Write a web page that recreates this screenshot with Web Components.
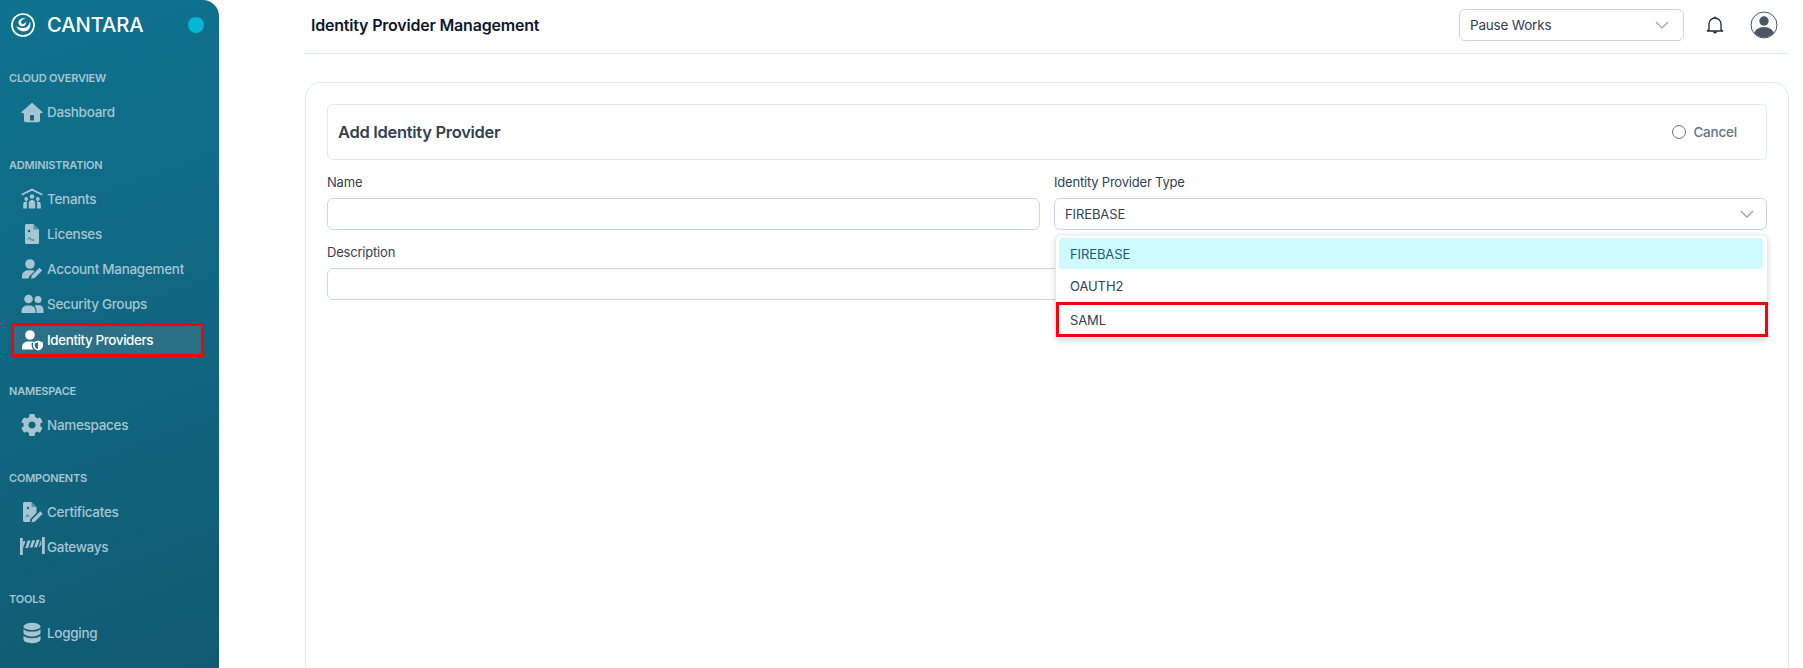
<!DOCTYPE html>
<html lang="en"><head><meta charset="utf-8"><title>Identity Provider Management</title>
<style>
html,body{margin:0;height:668px;overflow:hidden;background:#fff}
body{font-family:Inter,"Liberation Sans",sans-serif;color:#334155}
</style></head><body>
<idp-app>
  <app-sidebar slot="side">
    <nav-section label="CLOUD OVERVIEW">
      <nav-item icon="home">Dashboard</nav-item>
    </nav-section>
    <nav-section label="ADMINISTRATION">
      <nav-item icon="tenants">Tenants</nav-item>
      <nav-item icon="license">Licenses</nav-item>
      <nav-item icon="account">Account Management</nav-item>
      <nav-item icon="groups">Security Groups</nav-item>
      <nav-item icon="idp" active>Identity Providers</nav-item>
    </nav-section>
    <nav-section label="NAMESPACE">
      <nav-item icon="gear">Namespaces</nav-item>
    </nav-section>
    <nav-section label="COMPONENTS">
      <nav-item icon="cert">Certificates</nav-item>
      <nav-item icon="gate">Gateways</nav-item>
    </nav-section>
    <nav-section label="TOOLS">
      <nav-item icon="db">Logging</nav-item>
    </nav-section>
  </app-sidebar>
  <top-bar slot="top" heading="Identity Provider Management"></top-bar>
  <idp-card slot="main"></idp-card>
</idp-app>
<script>
const ICONS={
home:'<path d="M11 1.800 .800 10.800c-.6.6-.2 1.500.6 1.500H3v7.200c0 1 .8 1.800 1.800 1.800h12.400c1 0 1.800-.8 1.800-1.800v-7.200h1.600c.8 0 1.200-.9.6-1.500z"/><rect x="9" y="14" width="4" height="5.500" rx=".6" fill="#12687f"/>',
tenants:'<path d="M11 .5 .3 6l.8 1.500L11 2.800l9.900 4.700.8-1.500z"/><circle cx="11" cy="8.500" r="2.300"/><circle cx="5.200" cy="11" r="1.900"/><circle cx="16.800" cy="11" r="1.900"/><path d="M7.700 20.500v-5c0-2 1.300-3.500 3.300-3.500s3.300 1.500 3.300 3.500v5zM2.200 20.500v-4c0-1.700 1.300-3 3-3 .4 0 .8 0 1.100.2-.3.600-.4 1.200-.4 1.800v5zM19.800 20.500v-4c0-1.700-1.300-3-3-3-.4 0-.8 0-1.100.2.300.6.400 1.200.4 1.800v5z"/>',
license:'<path d="M5.500 1h7L18 6.500V19.500c0 1-.8 1.500-1.500 1.500h-11C4.700 21 4 20.400 4 19.500V2.500C4 1.600 4.700 1 5.500 1z"/><path d="M12.500 1v5.500H18z" fill="#12687f" opacity=".55"/><circle cx="8" cy="8" r="1.300" fill="#12687f"/><path d="M7 16.500c1-2.500 2-2.500 3 0 .8 1.300 1.500.5 3 .2" fill="none" stroke="#12687f" stroke-width="1"/>',
account:'<circle cx="9" cy="6" r="4.800"/><path d="M1 20.500v-2.500c0-3.300 2.700-5.800 6-5.800h4c1 0 1.900.2 2.700.7L8.300 18.300 7.500 20.500z"/><path d="M10 20.800l1-3.500 7.500-7.500 2.700 2.700-7.500 7.500z"/>',
groups:'<circle cx="7.500" cy="6" r="4.300"/><circle cx="17" cy="6.500" r="3.500"/><path d="M.5 20v-2.200c0-3 2.500-5.300 5.500-5.300h3c3 0 5.500 2.400 5.500 5.300V20z"/><path d="M15.500 20v-2.500c0-2-.8-3.600-2-4.800.7-.3 1.500-.4 2.300-.4h2.400c2.500 0 4.300 2 4.300 4.500V20z"/>',
idp:'<circle cx="9" cy="6" r="4.800"/><path d="M1 20.500v-2.200c0-3.200 2.600-5.800 5.800-5.800h4.400c.9 0 1.700.2 2.400.5-1.400.5-2.100.7-3 .9v2c0 1.700.5 3.300 2 4.600z"/><path d="M17 11.500l5 1.900v3.100c0 2.500-2 4.400-5 5-3-.6-5-2.500-5-5v-3.100z"/><path d="M17 13.300v6.800c-2-.5-3.300-2-3.300-3.700v-1.800z" fill="#2b7087"/>',
gear:'<path d="M21.300 13.500l-2-1.100c.2-.9.2-1.900 0-2.800l2-1.100c.2-.1.3-.4.2-.6-.5-1.700-1.400-3.100-2.500-4.400-.2-.2-.4-.2-.6-.1l-2 1.100c-.7-.6-1.600-1.100-2.400-1.400V.9c0-.2-.2-.4-.4-.5-1.700-.4-3.500-.4-5.100 0-.2.100-.4.300-.4.500v2.300c-.9.300-1.700.8-2.400 1.400l-2-1.100c-.2-.1-.5-.1-.6.1C1.900 4.900 1 6.300.5 7.900c-.1.200 0 .5.200.6l2 1.100c-.2.900-.2 1.900 0 2.800l-2 1.100c-.2.100-.3.400-.2.600.5 1.700 1.400 3.100 2.500 4.400.2.200.4.200.6.100l2-1.100c.7.600 1.600 1.100 2.400 1.400v2.300c0 .2.200.4.400.5 1.700.4 3.500.4 5.100 0 .2-.1.400-.3.400-.5v-2.300c.9-.3 1.700-.8 2.400-1.400l2 1.100c.2.100.5.100.6-.1 1.100-1.300 2-2.700 2.500-4.400.1-.2 0-.5-.2-.6zM11 14.600c-1.900 0-3.600-1.600-3.600-3.600s1.600-3.600 3.600-3.600 3.600 1.600 3.600 3.600-1.700 3.600-3.600 3.600z"/>',
cert:'<path d="M3.500 1h7l5 5v5.800l-6 6-.8 3.200H3.500C2.700 21 2 20.300 2 19.500v-17C2 1.700 2.700 1 3.500 1z"/><path d="M10.500 1v5h5z" fill="#12687f" opacity=".55"/><circle cx="7" cy="7" r="1.200" fill="#12687f"/><path d="M5 16c1-2.500 2-2.500 3 0" fill="none" stroke="#12687f" stroke-width="1"/><path d="M10.500 21.300l.8-3 8-8 2.400 2.400-8 8z"/>',
gate:'<rect x="-1" y="2" width="2.800" height="17"/><rect x="21" y="1" width="2.800" height="17"/><path d="M2 5.200 4.500 5 2 12.200zM6.800 4.600h2.800l-2.600 7.400H4.200zM11.300 4.200h2.800l-2.600 7.400H8.700zM15.800 3.800h2.800L16 11.200h-2.800zM20.200 3.500v5.200L18.300 11l-.6-.1z"/>',
db:'<ellipse cx="11" cy="4.500" rx="8.500" ry="3.700"/><path d="M2.500 7.300v3.500c0 2 3.800 3.700 8.500 3.700s8.500-1.700 8.500-3.700V7.300c-1.800 1.700-5 2.500-8.500 2.500s-6.700-.8-8.500-2.500z"/><path d="M2.500 13.800v3.700c0 2 3.800 3.700 8.500 3.700s8.500-1.700 8.500-3.700v-3.700c-1.800 1.700-5 2.500-8.500 2.500s-6.700-.8-8.500-2.500z"/>'
};
function shell(el,html){el.attachShadow({mode:'open'}).innerHTML=html}
customElements.define('idp-app',class extends HTMLElement{constructor(){super();shell(this,`<style>
:host{display:grid;grid-template-columns:219px 1fr;grid-template-rows:54px 1fr;height:668px;overflow:hidden}
.side{grid-row:1/3;display:flex;min-height:0}
.top{padding:0 14px 0 87px;display:block}
.main{padding:28px 14px 0 86px;min-height:0;overflow:hidden}
</style><div class="side"><slot name="side"></slot></div><div class="top"><slot name="top"></slot></div><div class="main"><slot name="main"></slot></div>`)}});
customElements.define('app-sidebar',class extends HTMLElement{constructor(){super();shell(this,`<style>
:host{display:block;width:219px;height:668px;border-top-right-radius:16px;background:linear-gradient(160deg,#0f7390 0%,#115a72 100%);box-sizing:border-box}
.brand{height:49px;padding:0 15px 0 11px;display:flex;align-items:center;box-sizing:border-box}
.name{margin-left:12px;font-size:20.200px;font-weight:500;color:#fff;letter-spacing:-.1px}
.dot{margin-left:auto;width:16px;height:16px;border-radius:50%;background:#06b6d4}
.list{display:flex;flex-direction:column;gap:19.500px;padding-top:14px}
</style><div class="brand"><svg width="24" height="24" viewBox="0 0 24 24"><circle cx="12" cy="12" r="11" fill="none" stroke="#fff" stroke-width="1.700"/><path d="M5 13C7 18 13 20 17 17 19.500 15 20 11.500 19 8 18.500 12 16 15 12.500 15 9.500 15 7 14.500 5 13z" fill="#fff"/><path d="M15 6C11 4 7 7 7.500 10.500 8 13 11 14 13 13 15 12 15.500 9.500 14 8.500 14.500 10 13 11.500 11.500 11 10 10.500 9.500 9 10.500 7.500 11.500 6.300 13.500 6 15 6z" fill="#fff"/></svg><span class="name">CANTARA</span><span class="dot"></span></div><div class="list"><slot></slot></div>`)}});
customElements.define('nav-section',class extends HTMLElement{constructor(){super();shell(this,`<style>
:host{display:block}
.label{height:32px;line-height:31px;padding-left:9px;font-size:11px;font-weight:600;color:#a5c5d2;letter-spacing:-.2px}
.items{display:flex;flex-direction:column}
</style><div class="label">${this.getAttribute('label')}</div><div class="items"><slot></slot></div>`)}});
customElements.define('nav-item',class extends HTMLElement{constructor(){super();const on=this.hasAttribute('active');shell(this,`<style>
:host{display:flex;height:35px;box-sizing:border-box;padding:${on?'1px 15px 0 11px':'0 15px 1px 11px'}}
.row{flex:1;display:flex;align-items:center;box-sizing:border-box;border:3px solid ${on?'#f60208':'transparent'};background:${on?'#2b7087':'transparent'};padding-left:7px;color:${on?'#fff':'#a5c5d2'};font-size:13.500px;font-weight:500;letter-spacing:${on?'-.42px':'-.3px'};white-space:nowrap}
svg{width:22px;height:22px;margin-right:4px;flex:none;overflow:visible;fill:${on?'#fff':'#a5c5d2'}}
</style><div class="row"><svg viewBox="0 0 22 22">${ICONS[this.getAttribute('icon')]}</svg><slot></slot></div>`)}});
customElements.define('top-bar',class extends HTMLElement{constructor(){super();shell(this,`<style>
:host{display:flex;align-items:center;height:54px;box-sizing:border-box;border-bottom:1px solid #e2e8f0;padding:0 11px 3px 0;margin-left:-1px}
h1{margin:0 0 0 6px;font-size:16px;font-weight:600;color:#0f172a;letter-spacing:-.2px;flex:1}
.sel{width:225px;height:32px;box-sizing:border-box;border:1px solid #cbd5e1;border-radius:6px;display:flex;align-items:center;justify-content:space-between;padding:0 14px 0 10px;font-size:13.500px;color:#334155;letter-spacing:-.2px}
.bell{margin-left:21px;width:20px;height:20px}
.av{margin-left:25px;width:28px;height:28px}
</style><h1>${this.getAttribute('heading')}</h1><div class="sel"><span>Pause Works</span><svg width="14" height="8" viewBox="0 0 14 8"><path d="M1 1l6 6 6-6" fill="none" stroke="#94a3b8" stroke-width="1.200"/></svg></div>
<svg class="bell" viewBox="0 0 20 20"><path d="M4 14.500V9a6 6 0 0 1 12 0v5.500l1.700 1.500H2.300z" fill="none" stroke="#1e293b" stroke-width="1.300" stroke-linejoin="round"/><path d="M8 16.500a2 2 0 0 0 4 0z" fill="#1e293b"/><path d="M10 1.500V3" stroke="#1e293b" stroke-width="1.300"/></svg>
<svg class="av" viewBox="0 0 28 28"><defs><clipPath id="c"><circle cx="14" cy="14" r="12.500"/></clipPath></defs><circle cx="14" cy="14" r="13" fill="#fff" stroke="#475569" stroke-width="1"/><g clip-path="url(#c)" fill="#4b5563"><circle cx="14" cy="10" r="4.700"/><ellipse cx="14" cy="23.500" rx="10" ry="7.500"/></g></svg>`)}});
customElements.define('form-field',class extends HTMLElement{constructor(){super();shell(this,`<style>
:host{display:block;position:relative}
label{display:block;height:26px;line-height:26px;font-size:13px;color:#334155;letter-spacing:-.2px;margin:9px 0 3px}
.box{height:32px;box-sizing:border-box;border:1px solid #cbd5e1;border-radius:6px;background:#fff;display:flex;align-items:center;justify-content:space-between;padding:0 12px 0 10px;font-size:13px;color:#334155;letter-spacing:-.1px}
</style><label>${this.getAttribute('label')}</label><div class="box"><slot></slot></div><slot name="over"></slot>`)}});
customElements.define('drop-menu',class extends HTMLElement{constructor(){super();shell(this,`<style>
:host{display:block;position:absolute;left:1px;right:-1px;top:74px;z-index:2;background:#fff;border:1px solid #e2e8f0;border-radius:6px;box-sizing:border-box;height:104px;padding:3px 0 0;box-shadow:0 3px 6px rgba(15,23,42,.16)}
.o{height:31px;margin:0 4px 0 3px;padding-left:11px;display:flex;align-items:center;font-size:13px;color:#334155;border-radius:4px;letter-spacing:-.1px;box-sizing:border-box}
.s{background:#cffafe;color:#155e75}
.o.m{height:33px}
.r{height:35px;margin:0 -1px 0 0;padding-left:11px;border:3px solid #f60208;border-radius:0}
</style><div class="o s">FIREBASE</div><div class="o m">OAUTH2</div><div class="o r">SAML</div>`)}});
customElements.define('idp-card',class extends HTMLElement{constructor(){super();shell(this,`<style>
:host{display:block;height:700px;box-sizing:border-box;border:1px solid #e2e8f0;border-bottom:0;border-radius:16px 16px 0 0;padding:21px 21px 0 21px;background:#fff}
.head{height:56px;box-sizing:border-box;border:1px solid #e2e8f0;border-radius:6px;display:flex;align-items:center;justify-content:space-between;padding:0 29px 0 10px}
h2{margin:0;font-size:16.500px;font-weight:600;color:#334155;letter-spacing:-.3px}
.cancel{display:flex;align-items:center;gap:7px;font-size:13.500px;font-weight:500;color:#64748b;letter-spacing:-.2px}
.c{width:14px;height:14px;border:1.500px solid #64748b;border-radius:50%;box-sizing:border-box}
.grid{display:grid;grid-template-columns:713px 713px;column-gap:14px;row-gap:0}
.full{grid-column:1/3}
</style><div class="head"><h2>Add Identity Provider</h2><div class="cancel"><span class="c"></span>Cancel</div></div>
<div class="grid"><form-field label="Name"></form-field>
<form-field label="Identity Provider Type"><span>FIREBASE</span><svg width="14" height="8" viewBox="0 0 14 8"><path d="M1 1l6 6 6-6" fill="none" stroke="#94a3b8" stroke-width="1.300"/></svg><drop-menu slot="over"></drop-menu></form-field>
<form-field class="full" label="Description"></form-field></div>`)}});
</script>
</body></html>
